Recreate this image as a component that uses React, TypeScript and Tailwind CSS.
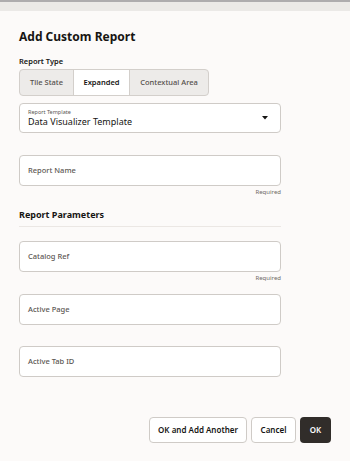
const font = { fontFamily: '"Noto Sans", "Open Sans", sans-serif' }

function TextField({ label, required }: { label: string; required?: boolean }) {
  return (
    <div className="flex flex-col">
      <div className="h-[31px] rounded-[4px] border border-[#cfcbc7] bg-white flex items-center px-[8px]">
        <span className="text-[7.5px] font-medium text-[#5c5753]">{label}</span>
      </div>
      {required && (
        <div className="mt-[2px] h-[8px] text-right text-[6px] leading-[8px] text-[#6f6a66]">Required</div>
      )}
    </div>
  )
}

export default function App() {
  return (
    <div className="w-[350px] h-[461px] bg-[#fcfaf9] flex flex-col text-[#161513]" style={font}>
      {/* backdrop strip */}
      <div className="h-[11px] flex flex-col">
        <div className="h-[2px] bg-[#aeacae]" />
        <div className="flex-1 bg-[#ebe9e7]" />
      </div>

      <div className="flex flex-col pl-[19px]">
        <h1 className="mt-[18px] text-[12px] leading-[16px] font-bold">Add Custom Report</h1>

        <div className="mt-[11px] text-[7.5px] leading-[10px] font-semibold">Report Type</div>
        <div className="mt-[3px] flex w-[190px] h-[27px] rounded-[4px] border border-[#d3cfcb] bg-[#edebe9] overflow-hidden text-[7.5px]">
          <div className="w-[53px] flex items-center justify-center text-[#55504c] font-medium">Tile State</div>
          <div className="w-[57px] flex items-center justify-center bg-white border-x border-[#d3cfcb] font-semibold">Expanded</div>
          <div className="flex-1 flex items-center justify-center text-[#55504c] font-medium">Contextual Area</div>
        </div>

        <div className="mt-[7px] w-[262px] h-[30px] rounded-[4px] border border-[#cfcbc7] bg-white flex items-center pl-[8px] pr-[12px]">
          <div className="flex-1 flex flex-col">
            <span className="text-[5.5px] leading-[7px] text-[#5c5753]">Report Template</span>
            <span className="text-[9px] leading-[12px]">Data Visualizer Template</span>
          </div>
          <svg width="6" height="4" viewBox="0 0 6 4" className="fill-[#161513]">
            <path d="M0 0h6L3 3.5z" />
          </svg>
        </div>

        <div className="mt-[22px] w-[262px]">
          <TextField label="Report Name" required />
        </div>

        <div className="mt-[13px] text-[9px] leading-[12px] font-bold">Report Parameters</div>
        <div className="mt-[5px] w-[262px] h-px bg-[#ebe7e4]" />

        <div className="mt-[14px] w-[262px]">
          <TextField label="Catalog Ref" required />
        </div>
        <div className="mt-[12px] w-[262px]">
          <TextField label="Active Page" />
        </div>
        <div className="mt-[21px] w-[262px]">
          <TextField label="Active Tab ID" />
        </div>
      </div>

      <div className="mt-[40px] flex justify-end gap-[4px] pr-[19px] text-[8px] font-semibold">
        <button className="h-[26px] w-[98px] rounded-[4px] border border-[#cfcbc7] bg-white">OK and Add Another</button>
        <button className="h-[26px] w-[45px] rounded-[4px] border border-[#cfcbc7] bg-white">Cancel</button>
        <button className="h-[26px] w-[31px] rounded-[4px] bg-[#312d2a] text-white">OK</button>
      </div>
    </div>
  )
}
